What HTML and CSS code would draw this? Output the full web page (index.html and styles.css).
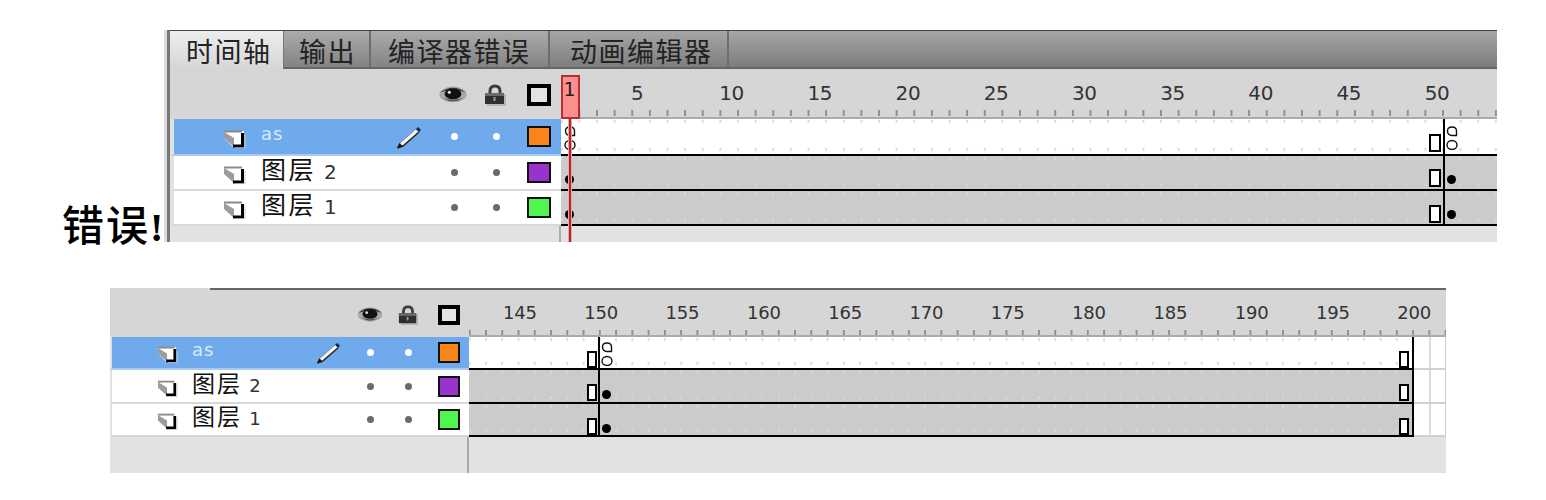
FILE: index.html
```html
<!DOCTYPE html>
<html lang="zh-CN">
<head>
<meta charset="utf-8">
<title>时间轴</title>
<link rel="stylesheet" href="styles.css">
</head>
<body>
<svg class="defs" width="0" height="0" aria-hidden="true">
  <symbol id="page" viewBox="0 0 23 19">
    <path d="M1 2H21V18H10L1 9Z" fill="#fff"/>
    <path d="M1 2.500H19" stroke="#8a8a8a" stroke-width="2" fill="none"/>
    <path d="M1 3V9L11 18V9Q6 6 1 3Z" fill="#9c9c9c"/>
    <path d="M19.500 4V17H10" stroke="#000" stroke-width="3" fill="none"/>
    <path d="M22 6V19H12" stroke="#ccc" stroke-width="1" fill="none"/>
  </symbol>
  <symbol id="pencil" viewBox="0 0 26 24">
    <path d="M1 23L4 18L20 4L23 7L7 21Z" fill="#f6f6f6" stroke="#777" stroke-width="0.800"/>
    <path d="M1.500 23L7 21L23 7" fill="none" stroke="#2a2a2a" stroke-width="1.600"/>
    <path d="M1 23L3.500 18L6.500 21Z" fill="#111"/>
    <path d="M20 4L22 2L25 5L23 7Z" fill="#14264a"/>
  </symbol>
  <symbol id="eye" viewBox="0 0 28 19">
    <ellipse cx="14" cy="9" rx="13" ry="7.500" fill="#aaa"/>
    <path d="M2 7Q14 -2 26 7Q14 3 2 7Z" fill="#333"/>
    <path d="M4 12Q14 19 24 12Q14 16 4 12Z" fill="#555"/>
    <ellipse cx="14" cy="8.500" rx="8" ry="5" fill="#111"/>
    <circle cx="10.500" cy="7" r="1.500" fill="#ddd"/>
  </symbol>
  <symbol id="lock" viewBox="0 0 22 22">
    <rect x="3" y="10" width="19" height="12" fill="#b4b4b4"/>
    <path d="M6 10V7Q6 2 11 2Q16 2 16 7V10" fill="none" stroke="#3c3c3c" stroke-width="3"/>
    <rect x="1" y="9" width="19" height="11" fill="#2e2e2e"/>
    <rect x="1" y="9" width="19" height="3" fill="#6a6a6a"/>
    <rect x="9.500" y="13" width="2" height="4" fill="#999"/>
  </symbol>
  <symbol id="action" viewBox="0 0 12 24">
    <path d="M1.500 5Q1.500 1 6 1Q10.500 1 10.500 5V9.500H6Q1.500 9.500 1.500 5Z" fill="none" stroke="#111" stroke-width="1.400"/>
    <ellipse cx="6" cy="19" rx="5" ry="4.500" fill="none" stroke="#111" stroke-width="1.400"/>
  </symbol>
</svg>

<section class="first">
  <h1 class="error">错误<span class="bang">!</span></h1>
  <div class="panel panel-a">
    <nav class="tabs">
      <span class="tab tab-active">时间轴</span>
      <span class="tab tab-output">输出</span>
      <span class="tab tab-errors">编译器错误</span>
      <span class="tab tab-motion">动画编辑器</span>
    </nav>
    <div class="timeline">
      <div class="head">
        <div class="head-left">
          <svg class="ico-eye"><use href="#eye"/></svg>
          <svg class="ico-lock"><use href="#lock"/></svg>
          <span class="outline"></span>
        </div>
        <div class="ruler">
          <span>5</span><span>10</span><span>15</span><span>20</span><span>25</span><span>30</span><span>35</span><span>40</span><span>45</span><span>50</span>
        </div>
      </div>
      <div class="rows">
        <div class="row row-1 row-sel">
          <div class="layer">
            <svg class="ico-page"><use href="#page"/></svg>
            <span class="name name-latin">as</span>
            <svg class="ico-pencil"><use href="#pencil"/></svg>
            <i class="slot slot-eye"><b class="dot"></b></i>
            <i class="slot slot-lock"><b class="dot"></b></i>
            <span class="swatch orange"></span>
          </div>
          <div class="track track-white">
            <svg class="action start"><use href="#action"/></svg>
            <span class="rect"></span>
            <svg class="action after"><use href="#action"/></svg>
          </div>
        </div>
        <div class="row row-2">
          <div class="layer">
            <svg class="ico-page"><use href="#page"/></svg>
            <span class="name">图层 <em>2</em></span>
            <span class="no-pencil"></span>
            <i class="slot slot-eye"><b class="dot"></b></i>
            <i class="slot slot-lock"><b class="dot"></b></i>
            <span class="swatch purple"></span>
          </div>
          <div class="track">
            <span class="key start"></span>
            <span class="rect"></span>
            <span class="key after"></span>
          </div>
        </div>
        <div class="row row-3">
          <div class="layer">
            <svg class="ico-page"><use href="#page"/></svg>
            <span class="name">图层 <em>1</em></span>
            <span class="no-pencil"></span>
            <i class="slot slot-eye"><b class="dot"></b></i>
            <i class="slot slot-lock"><b class="dot"></b></i>
            <span class="swatch green"></span>
          </div>
          <div class="track">
            <span class="key start"></span>
            <span class="rect"></span>
            <span class="key after"></span>
          </div>
        </div>
        <span class="frame-line"></span>
      </div>
      <div class="foot"><div class="foot-left"></div><div class="foot-right"></div></div>
      <div class="playhead"><span class="playhead-box">1</span><span class="playhead-line"></span></div>
    </div>
  </div>
</section>

<section class="second">
  <div class="panel panel-b">
    <div class="timeline">
      <div class="head">
        <div class="head-left">
          <svg class="ico-eye"><use href="#eye"/></svg>
          <svg class="ico-lock"><use href="#lock"/></svg>
          <span class="outline"></span>
        </div>
        <div class="ruler">
          <span>145</span><span>150</span><span>155</span><span>160</span><span>165</span><span>170</span><span>175</span><span>180</span><span>185</span><span>190</span><span>195</span><span>200</span>
        </div>
      </div>
      <div class="rows">
        <div class="row row-1 row-sel">
          <div class="layer">
            <svg class="ico-page"><use href="#page"/></svg>
            <span class="name name-latin">as</span>
            <svg class="ico-pencil"><use href="#pencil"/></svg>
            <i class="slot slot-eye"><b class="dot"></b></i>
            <i class="slot slot-lock"><b class="dot"></b></i>
            <span class="swatch orange"></span>
          </div>
          <div class="track track-white">
            <span class="rect"></span>
            <svg class="action after"><use href="#action"/></svg>
            <span class="rect end"></span>
            <span class="spare"></span>
          </div>
        </div>
        <div class="row row-2">
          <div class="layer">
            <svg class="ico-page"><use href="#page"/></svg>
            <span class="name">图层 <em>2</em></span>
            <span class="no-pencil"></span>
            <i class="slot slot-eye"><b class="dot"></b></i>
            <i class="slot slot-lock"><b class="dot"></b></i>
            <span class="swatch purple"></span>
          </div>
          <div class="track">
            <span class="rect"></span>
            <span class="key after"></span>
            <span class="rect end"></span>
            <span class="spare"></span>
          </div>
        </div>
        <div class="row row-3">
          <div class="layer">
            <svg class="ico-page"><use href="#page"/></svg>
            <span class="name">图层 <em>1</em></span>
            <span class="no-pencil"></span>
            <i class="slot slot-eye"><b class="dot"></b></i>
            <i class="slot slot-lock"><b class="dot"></b></i>
            <span class="swatch green"></span>
          </div>
          <div class="track">
            <span class="rect"></span>
            <span class="key after"></span>
            <span class="rect end"></span>
            <span class="spare"></span>
          </div>
        </div>
        <span class="frame-line"></span>
        <span class="frame-line frame-line-end"></span>
      </div>
      <div class="foot"><div class="foot-left"></div><div class="foot-right"></div></div>
    </div>
  </div>
</section>
</body>
</html>
```

FILE: styles.css
```css
* { box-sizing: border-box; }

body {
  margin: 0;
  background: #fff;
  font-family: "DejaVu Sans", "Noto Sans CJK SC", sans-serif;
  color: #222;
}

.defs { position: absolute; }

.first {
  display: flex;
  align-items: flex-end;
  padding: 30px 0 0 62px;
}

.error {
  width: 105px;
  margin: 0 0 -11px 0;
  font-family: "Noto Sans CJK SC", serif;
  font-size: 42px;
  line-height: 50px;
  font-weight: 500;
  color: #000;
  white-space: nowrap;
  letter-spacing: 2px;
}

.bang {
  font-family: "Liberation Serif", serif;
  font-weight: 700;
  font-size: 40px;
  letter-spacing: 0;
}

.second { padding: 46px 0 0 110px; }

/* Panels: dimensions differ between the two timelines */
.panel-a {
  --left: 391px;
  --head-h: 50px;
  --pad-l: 49px;
  --pad-r: 10px;
  --icon-w: 23px;
  --icon-h: 19px;
  --name-gap: 15px;
  --pencil-w: 26px;
  --pencil-h: 24px;
  --after-pencil: 22px;
  --dot-gap: 22px;
  --swatch-gap: 21px;
  --swatch-w: 24px;
  --swatch-h: 21px;
  --outline-h: 22px;
  --cjk: 25px;
  --cjk-sp: 2.5px;
  --num: 20px;
  --num-sp: -0.4px;
  --pitch: 17.63px;
  --phase: 17.4px;
  --cell: 88.2px;
  --ruler-pad: 70px;
  --tick-y: 41px;
  --rect-w: 12px;
  --rect-h: 18px;
  width: 1330px;
  height: 212px;
  border-left: 3px solid #777;
  box-shadow: -3px 0 0 #dcdcdc;
}

.panel-b {
  --left: 359px;
  --head-h: 49px;
  --pad-l: 45px;
  --pad-r: 9px;
  --icon-w: 21px;
  --icon-h: 18px;
  --name-gap: 14px;
  --pencil-w: 25px;
  --pencil-h: 23px;
  --after-pencil: 19px;
  --dot-gap: 18px;
  --swatch-gap: 20px;
  --swatch-w: 22px;
  --swatch-h: 21px;
  --outline-h: 20px;
  --cjk: 23px;
  --cjk-sp: 2px;
  --num: 18px;
  --num-sp: -0.2px;
  --pitch: 16.27px;
  --phase: 16px;
  --cell: 81.3px;
  --ruler-pad: 34px;
  --tick-y: 40px;
  --rect-w: 10px;
  --rect-h: 17px;
  width: 1336px;
  height: 185px;
}

.panel { position: relative; background: #e2e2e2; }

/* Tabs */
.tabs {
  display: flex;
  height: 39px;
  border-top: 1px solid #444;
  border-bottom: 2px solid #666;
  background: linear-gradient(#a6a6a6, #7c7c7c);
  font-family: "Noto Sans CJK SC", sans-serif;
  font-size: 27px;
  letter-spacing: 1.5px;
  line-height: 39px;
}

.tab {
  background: linear-gradient(#ababab, #838383);
  border-right: 2px solid #6d6d6d;
  color: #222;
  white-space: nowrap;
}

.tab-active {
  width: 114px;
  height: 38px;
  padding-left: 16px;
  background: linear-gradient(#ededed, #d6d6d6);
  border-right: 1px solid #777;
}
.tab-output { width: 87px; padding-left: 15px; }
.tab-errors { width: 179px; padding-left: 17px; }
.tab-motion { width: 179px; padding-left: 20px; background: linear-gradient(#a6a6a6, #7e7e7e); }

/* Timeline */
.timeline { position: relative; }

.head {
  display: flex;
  height: var(--head-h);
  background: #d6d6d6;
}

.panel-b .head { border-top: 2px solid transparent; }
.panel-b .head::before {
  content: "";
  position: absolute;
  left: 100px;
  right: 0;
  top: 0;
  height: 2px;
  background: #666;
}

.head-left {
  flex: 0 0 var(--left);
  display: flex;
  align-items: center;
  justify-content: flex-end;
  padding: 2px var(--pad-r) 0 0;
}

.ico-eye { width: 30px; height: 20px; margin-right: 16px; }
.panel-b .ico-eye { width: 28px; height: 18px; margin-right: 14px; }
.ico-lock { width: 22px; height: 22px; margin-right: var(--swatch-gap); }
.panel-b .ico-lock { width: 20px; height: 20px; }

.outline {
  width: var(--swatch-w);
  height: var(--outline-h);
  border: 4px solid #000;
  background: #e4e4e4;
}

.ruler {
  flex: 1;
  display: flex;
  padding: 12px 0 0 var(--ruler-pad);
  border-bottom: 2px solid #aaa;
  font-size: var(--num);
  line-height: 24px;
  letter-spacing: var(--num-sp);
  color: #333;
  overflow: hidden;
  background: linear-gradient(90deg, #8f8f8f 2px, transparent 2px) var(--phase) var(--tick-y) / var(--pitch) 6px repeat-x;
}

.panel-b .ruler { padding-top: 11px; }

.ruler span { flex: 0 0 var(--cell); white-space: nowrap; }

.rows { position: relative; }

.row { display: flex; }
.row-1 { height: 37px; }
.row-2, .row-3 { height: 35px; }
.panel-b .row-1 { height: 33px; }
.panel-b .row-2 { height: 34px; }
.panel-b .row-3 { height: 33px; }

.layer {
  flex: 0 0 var(--left);
  display: flex;
  align-items: center;
  padding: 0 var(--pad-r) 0 var(--pad-l);
  background: #fff;
  border-bottom: 2px solid #d8d8d8;
  border-left: 4px solid #e2e2e2;
  color: #222;
}

.panel-b .layer { border-left-width: 2px; }

.row-sel .layer { background: #6faaec; color: #dff0ff; border-bottom-color: #a9cbf0; }

.ico-page { flex: none; width: var(--icon-w); height: var(--icon-h); margin-top: 3px; }

.name {
  flex: 1;
  margin: -5px 0 0 var(--name-gap);
  font-family: "Noto Sans CJK SC", sans-serif;
  font-size: var(--cjk);
  letter-spacing: var(--cjk-sp);
  line-height: 26px;
  white-space: nowrap;
  color: #111;
}

.name em {
  font-family: "DejaVu Sans", sans-serif;
  font-style: normal;
  font-size: var(--num);
  letter-spacing: 0;
  color: #333;
}

.name-latin {
  font-family: "DejaVu Sans", sans-serif;
  font-size: 18px;
  letter-spacing: 1px;
  color: #d5ebff;
}

.ico-pencil {
  flex: none;
  width: var(--pencil-w);
  height: var(--pencil-h);
  margin-right: var(--after-pencil);
}

.no-pencil {
  flex: none;
  width: var(--pencil-w);
  margin-right: var(--after-pencil);
}

.slot { flex: none; width: 20px; display: flex; justify-content: center; }
.slot-eye { margin-right: var(--dot-gap); }
.slot-lock { margin-right: var(--swatch-gap); }

.dot { width: 7px; height: 7px; border-radius: 50%; background: #6a6a6a; }
.row-sel .dot { background: #fff; }

.swatch {
  flex: none;
  width: var(--swatch-w);
  height: var(--swatch-h);
  border: 2px solid #111;
}
.orange { background: #f8841a; }
.purple { background: #9a33cc; }
.green { background: #4ff64f; }

/* Frames */
.track {
  flex: 1;
  position: relative;
  display: flex;
  background-color: #cbcbcb;
  background-image:
    linear-gradient(90deg, #d6d6d6 2px, transparent 2px),
    linear-gradient(90deg, #d6d6d6 2px, transparent 2px);
  background-repeat: repeat-x;
  background-size: var(--pitch) 3px;
  background-position: var(--phase) 1px, var(--phase) calc(100% - 3px);
  border-bottom: 2px solid #000;
}

.track-white {
  background-color: #fff;
  background-image:
    linear-gradient(90deg, #ddd 2px, transparent 2px),
    linear-gradient(90deg, #ddd 2px, transparent 2px);
}

.rect {
  position: absolute;
  width: var(--rect-w);
  height: var(--rect-h);
  border: 2px solid #000;
  background: #fff;
}

.key {
  position: absolute;
  width: 9px;
  height: 9px;
  border-radius: 50%;
  background: #000;
}

.action { position: absolute; width: 12px; height: 24px; }

.panel-a .rect { left: 868px; }
.panel-a .row-1 .rect { top: 15px; }
.panel-a .row-2 .rect { top: 13px; }
.panel-a .row-3 .rect { top: 14px; }
.panel-a .action.start { left: 3px; top: 7px; }
.panel-a .action.after { left: 885px; top: 7px; }
.panel-a .key { top: 19px; }
.panel-a .key.start { left: 4px; }
.panel-a .key.after { left: 886px; }

.panel-b .rect { left: 118px; top: 14px; }
.panel-b .rect.end { left: 930px; }
.panel-b .action.after { left: 132px; top: 5px; }
.panel-b .key { top: 20px; }
.panel-b .key.after { left: 133px; }

.spare {
  position: absolute;
  top: 0;
  bottom: -2px;
  right: 0;
  width: 33px;
  background: #fff;
  border-bottom: 2px solid #d0d0d0;
  border-right: 1px solid #ccc;
}

.spare::before {
  content: "";
  position: absolute;
  left: 16px;
  top: 0;
  bottom: 0;
  width: 2px;
  background: #ddd;
}

.frame-line {
  position: absolute;
  top: 0;
  bottom: 0;
  width: 2px;
  background: #000;
}
.panel-a .frame-line { left: 1273px; }
.panel-b .frame-line { left: 488px; }
.panel-b .frame-line-end { left: 1302px; }

.foot { display: flex; height: 16px; }
.panel-b .foot { height: 36px; }
.foot-left { flex: 0 0 var(--left); border-right: 2px solid #aaa; }
.foot-right { flex: 1; }

/* Playhead */
.playhead {
  position: absolute;
  left: 391px;
  top: 6px;
  bottom: 0;
  width: 18px;
  display: flex;
  flex-direction: column;
  align-items: center;
}

.playhead-box {
  flex: none;
  width: 19px;
  height: 44px;
  padding-left: 1px;
  border: 2px solid #b43030;
  background: #ff8f8f;
  font-size: 19px;
  line-height: 24px;
  color: #222;
}

.playhead-line {
  flex: 1;
  width: 4px;
  background: linear-gradient(90deg, #f6a0a0 1px, #a82a2a 1px, #a82a2a 3px, #f6a0a0 3px);
}
```
